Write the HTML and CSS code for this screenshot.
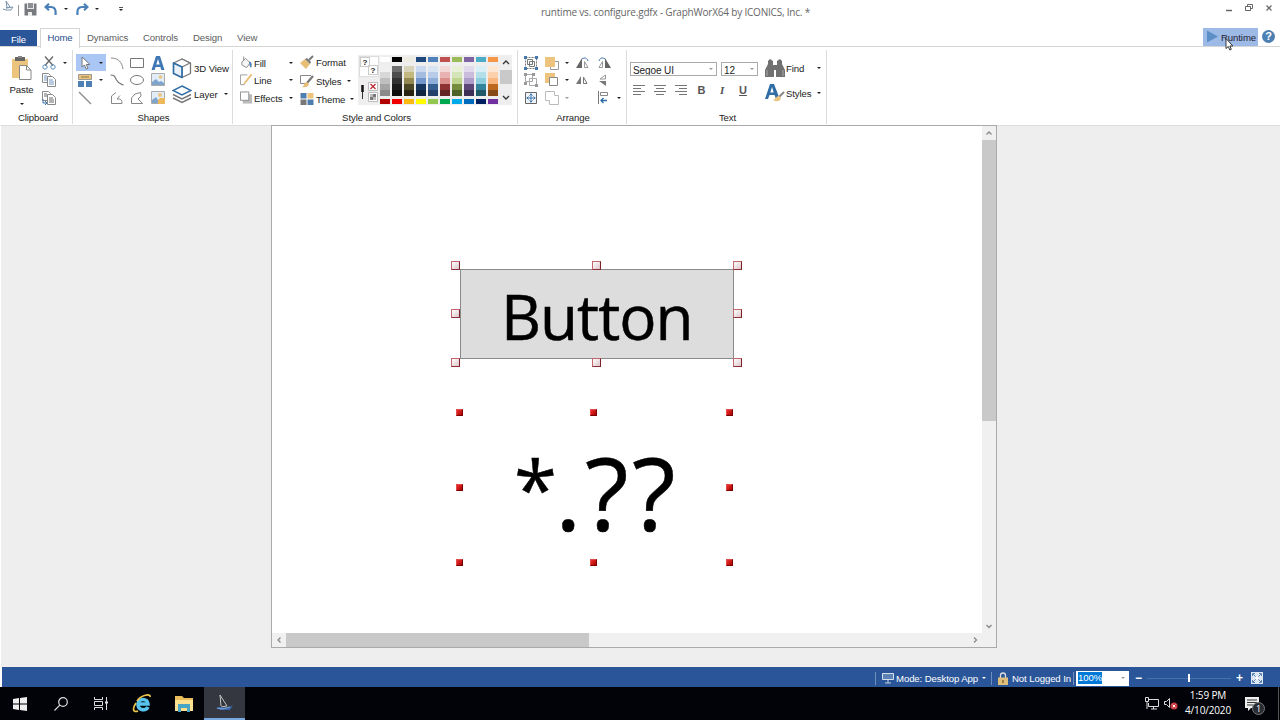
FILE: index.html
```
<!DOCTYPE html>
<html lang="en">
<head>
    <meta charset="UTF-8">
    <meta name="viewport" content="width=device-width, initial-scale=1.0">
    <title>GraphWorX64</title>
    <link rel="stylesheet" href="styles.css">
</head>
<body>

<header class="titlebar">
    <div class="quick-access">
        <svg class="qa-logo" width="11" height="12" viewBox="0 0 11 12" fill="none" stroke="#7893ad" stroke-width="1"><path d="M3 1l1 7M3 1l4 6-4 1M0 9l3 1h5l2-3-7 1"/></svg>
        <span class="qa-sep"></span>
        <svg class="qa-save" width="13" height="13" viewBox="0 0 13 13"><path d="M0.5 0.5h12v12h-12z" fill="#777b80"/><path d="M3 0h7v6H3z" fill="#e8e8e8"/><path d="M4 0h5v5H4z" fill="#8b8f94"/><path d="M4 9h4v4H4z" fill="#eee"/></svg>
        <svg class="qa-undo" width="14" height="13" viewBox="0 0 14 13" fill="none" stroke="#4a80b8" stroke-width="2.2"><path d="M5 0.8L1.5 4l3.5 3.3M2 4h5c4 0 5 3 4.5 8"/></svg>
        <i class="arrow"></i>
        <svg class="qa-redo" width="14" height="13" viewBox="0 0 14 13" fill="none" stroke="#4a80b8" stroke-width="2.2"><path d="M9 0.8L12.5 4 9 7.3M12 4H7C3 4 2 7 2.5 12"/></svg>
        <i class="arrow"></i>
        <span class="qa-more"><i class="arrow"></i></span>
    </div>
    <div class="window-title">runtime vs. configure.gdfx - GraphWorX64 by ICONICS, Inc. *</div>
    <svg class="window-buttons" width="50" height="14" viewBox="0 0 50 14" fill="none" stroke="#666"><path d="M1 9.500h6" stroke-width="1.500"/><path d="M20.500 5.500h5v4h-5zM22.500 5V3.500h5v4h-2"/><path d="M41.500 4.500l5 5M46.500 4.500l-5 5" stroke-width="1.200"/></svg>
</header>

<nav class="tabs">
    <span class="tab file">File</span>
    <span class="tab active">Home</span>
    <span class="tab dynamics">Dynamics</span>
    <span class="tab controls">Controls</span>
    <span class="tab design">Design</span>
    <span class="tab">View</span>
    <span class="runtime">
        <svg width="13" height="13" viewBox="0 0 13 13"><path d="M1 0.500L12 6.500 1 12.500z" fill="#5c8fc5"/></svg>
        <span>Runtime</span>
        <svg class="cursor" width="9" height="13" viewBox="0 0 9 13"><path d="M1 0.500v10l2.300-2 1.500 3.500 1.500-.700-1.500-3.300h3z" fill="#fff" stroke="#222" stroke-width=".9"/></svg>
    </span>
    <span class="help">?</span>
</nav>

<section class="ribbon">
    <div class="group clipboard">
        <div class="group-body">
            <div class="paste">
                <svg width="20" height="24" viewBox="0 0 20 24"><path d="M0 3h16v19H0z" fill="#ecc47e"/><path d="M3 1h10v4H3z" fill="#666"/><path d="M6 0h4v2H6z" fill="#888"/><path d="M7.500 9.500h7l4.500 4.500v9.500H7.500z" fill="#fff" stroke="#888"/><path d="M14.500 9.500V14H19" fill="none" stroke="#888"/></svg>
                <span>Paste</span>
                <i class="arrow"></i>
            </div>
            <div class="icon-grid clip-grid">
                <svg width="14" height="14" viewBox="0 0 14 14" fill="none"><path d="M3 0.500l8 9M11 0.500l-8 9" stroke="#666" stroke-width="1.300"/><circle cx="3" cy="11" r="2.200" stroke="#5f8fbe"/><circle cx="11" cy="11" r="2.200" stroke="#5f8fbe"/></svg>
                <i class="arrow"></i>
                <svg width="14" height="14" viewBox="0 0 14 14" fill="#fff" stroke="#888"><path d="M0.500 0.500h6l2 2v7h-8z"/><path d="M5.500 3.500h5l3 3v7h-8z"/><path d="M2 3h3M2 5h3M2 7h3M7 7h4M7 9h5M7 11h5" stroke="#6f97bf"/></svg>
                <span></span>
                <svg width="14" height="14" viewBox="0 0 14 14" fill="#fff" stroke="#888"><path d="M0.500 0.500h6l2 2v7h-8z"/><path d="M5.500 3.500h5l3 3v7h-8z"/><path d="M2 3h3M2 5h3M7 7h4M7 9h5M7 11h5" stroke="#666"/><path d="M1 8v4h3M3 10l2 2-2 2" stroke="#3d72aa" fill="none"/></svg>
                <span></span>
            </div>
        </div>
        <div class="group-label">Clipboard</div>
    </div>

    <div class="group shapes">
        <div class="group-body">
            <div class="icon-grid select-grid">
                <div class="selected">
                    <svg width="10" height="14" viewBox="0 0 10 14"><path d="M1 1v10l2.500-2 1.700 4 1.800-.800-1.700-3.700H9z" fill="#fff" stroke="#777"/></svg>
                    <i class="arrow"></i>
                </div>
                <div class="pick">
                    <svg width="14" height="13" viewBox="0 0 14 13"><path d="M0.500 0.500h13v5h-13z" fill="#ecc47e" stroke="#999"/><path d="M3 3h8" stroke="#8a7a55"/><path d="M0 7h6v6H0zM8 7h6v6H8z" fill="#4f80b4"/></svg>
                    <i class="arrow"></i>
                </div>
                <div class="pick">
                    <svg width="14" height="14" viewBox="0 0 14 14"><path d="M1 1l12 12" stroke="#888" stroke-width="1.200"/></svg>
                </div>
            </div>
            <div class="icon-grid shape-grid">
                <svg width="14" height="14" viewBox="0 0 14 14" fill="none" stroke="#888"><path d="M1 2c7 0 11 4 12 11"/></svg>
                <svg width="14" height="14" viewBox="0 0 14 14" fill="none" stroke="#777"><path d="M0.500 2.500h13v9H0.500z"/></svg>
                <svg width="14" height="14" viewBox="0 0 14 14"><path d="M0.500 14L5 0h4l4.500 14h-3.200l-.900-3H4.600l-.900 3zM5.300 8.500h3.400L7 3z" fill="#3f78b5" fill-rule="evenodd"/></svg>
                <svg width="14" height="14" viewBox="0 0 14 14" fill="none" stroke="#777" stroke-width="1.200"><path d="M0.500 2c4 0 4 1 6 5s4 4 7 5"/></svg>
                <svg width="14" height="14" viewBox="0 0 14 14" fill="none" stroke="#777"><ellipse cx="7" cy="7" rx="6.500" ry="4.500"/></svg>
                <svg width="14" height="14" viewBox="0 0 14 14"><path d="M0.500 0.500h13v12H0.500z" fill="#e3edf7" stroke="#aaa"/><circle cx="9.500" cy="4" r="1.800" fill="#ecc47e"/><path d="M1 12V9l4-3 3 3 2-1 3 2v2z" fill="#7fa5cc"/></svg>
                <svg width="14" height="14" viewBox="0 0 14 14" fill="none" stroke="#888"><path d="M6 1.500L1.500 5v7.500h10.500c0-3-1-4.500-3-4.500H7l3-3.500"/></svg>
                <svg width="14" height="14" viewBox="0 0 14 14" fill="none" stroke="#888"><path d="M10.500 1.500L5 3 1.500 7v5.500h11L8 8l3-3z"/></svg>
                <svg width="14" height="14" viewBox="0 0 14 14"><path d="M0.500 0.500h13v12H0.500z" fill="#e3edf7" stroke="#aaa"/><circle cx="9" cy="4" r="2" fill="#ecc47e"/><path d="M1 12V9l4-3 4 6z" fill="#7fa5cc"/><path d="M7 9l2-2h5v6H7z" fill="#ecb95c"/></svg>
            </div>
            <div class="view-column">
                <div class="tool">
                    <svg width="20" height="21" viewBox="0 0 20 21" fill="none" stroke-linejoin="round"><path d="M10 1l8.500 4v10.500L10 19.500z" stroke="#777" stroke-width="1.300"/><path d="M18 5l-8 4L1.500 5 10 1z" stroke="#777" stroke-width="1.300" fill="#fff"/><path d="M1.500 5L10 9v10.500l-8.500-4z" stroke="#316da5" stroke-width="1.700" fill="#eaf1f8"/></svg>
                    <span>3D View</span>
                </div>
                <div class="tool">
                    <svg width="20" height="19" viewBox="0 0 20 19" fill="none"><path d="M1 13l9 4.500 9-4.500M1 9.500L10 14l9-4.500" stroke="#777" stroke-width="1.500"/><path d="M10 1l9 4.500-9 4.500-9-4.500z" fill="#fff" stroke="#316da5" stroke-width="1.500"/></svg>
                    <span>Layer</span>
                    <i class="arrow"></i>
                </div>
            </div>
        </div>
        <div class="group-label">Shapes</div>
    </div>

    <div class="group style-colors">
        <div class="group-body">
            <div class="icon-grid fill-grid">
                <svg width="13" height="14" viewBox="0 0 14 14"><path d="M2 6l4-4 5 5-4 5-5-3z" fill="#f5f5f5" stroke="#888"/><path d="M4 0v5" stroke="#888"/><path d="M10 5c3 1 3 4 2 7-2-1-2-3-2-7z" fill="#4f80b4"/></svg>
                <span>Fill</span><i class="arrow"></i>
                <svg width="13" height="14" viewBox="0 0 14 14"><path d="M8 1.500H0.500V12H5" fill="none" stroke="#999"/><path d="M12.500 1l-8 10" stroke="#e7be76" stroke-width="2"/></svg>
                <span>Line</span><i class="arrow"></i>
                <svg width="13" height="14" viewBox="0 0 14 14"><path d="M3 3h10v10H3z" fill="#bbb"/><path d="M0.500 0.500h9v9h-9z" fill="#fff" stroke="#888"/></svg>
                <span>Effects</span><i class="arrow"></i>
            </div>
            <div class="format-column">
                <div class="tool">
                    <svg width="14" height="14" viewBox="0 0 14 14"><path d="M0 8l5-4 5 5-4 5z" fill="#e7be76"/><path d="M5 4l2-1 4 4-1 2z" fill="#777"/><path d="M9 5l4-4" stroke="#777" stroke-width="2"/></svg>
                    <span>Format</span>
                </div>
                <div class="tool">
                    <svg width="14" height="14" viewBox="0 0 14 14"><path d="M11 1.500H0.500v8h5" fill="none" stroke="#888"/><path d="M13 2L7 9" stroke="#777" stroke-width="2.200"/><path d="M7 8c-3 0-2 3-5 5 4 1 7-1 7-3z" fill="#e7be76"/></svg>
                    <span>Styles</span><i class="arrow"></i>
                </div>
                <div class="tool">
                    <svg width="14" height="14" viewBox="0 0 14 14"><path d="M0.500 1h6v5.500h-6zM7.500 7.500h6V13h-6z" fill="#4e7eaf"/><path d="M7.500 1h6v5.500h-6z" fill="#ecc47e"/><path d="M0.500 7.500h6V13h-6z" fill="#777"/></svg>
                    <span>Theme</span><i class="arrow"></i>
                </div>
            </div>
            <div class="palette">
                <div class="palette-tools">
                    <div class="unknown"><b>?</b><b>?</b></div>
                    <div class="pickers">
                        <svg width="7" height="20" viewBox="0 0 7 20"><path d="M0.500 0h6v20h-6z" fill="#eee"/><path d="M3.500 3v7" stroke="#111" stroke-width="2.500"/><path d="M3.500 10v7" stroke="#333"/></svg>
                        <svg width="10" height="20" viewBox="0 0 10 20"><path d="M.500.500h9v8h-9zM.500 10.500h9v9h-9z" fill="#fff" stroke="#bbb"/><path d="M2.500 2l5 5M7.500 2l-5 5" stroke="#b92b35" stroke-width="1.300"/><path d="M5 12h3v3H5zM2 15h3v3H2z" fill="#777"/><path d="M2 12h3v3H2zM5 15h3v3H5z" fill="#bbb"/></svg>
                    </div>
                </div>
                <div class="swatches" id="swatches"></div>
                <div class="palette-scroll">
                    <svg width="8" height="5" viewBox="0 0 8 5"><path d="M1 4l3-3 3 3" fill="none" stroke="#333" stroke-width="1.300"/></svg>
                    <span class="palette-thumb"></span>
                    <svg width="8" height="5" viewBox="0 0 8 5"><path d="M1 1l3 3 3-3" fill="none" stroke="#333" stroke-width="1.300"/></svg>
                </div>
            </div>
        </div>
        <div class="group-label">Style and Colors</div>
    </div>

    <div class="group arrange">
        <div class="group-body">
            <div class="icon-grid arrange-grid">
                <svg width="14" height="14" viewBox="0 0 14 14" fill="none" stroke="#777"><path d="M1.500 1.500h11v11h-11z" stroke-dasharray="2 1"/><path d="M3.500 3.500h5v5h-5zM5.500 5.500h5v5h-5z"/><path d="M0 0h3v3H0zM11 0h3v3h-3zM0 11h3v3H0zM11 11h3v3h-3z" fill="#4578ad" stroke="none"/></svg>
                <svg width="14" height="14" viewBox="0 0 14 14"><path d="M5.500 5.500h8v8h-8z" fill="#fff" stroke="#999"/><path d="M0 1h10v10H0z" fill="#ecc47e"/></svg>
                <i class="arrow"></i>
                <svg width="14" height="12" viewBox="0 0 14 12"><path d="M6 1v10H0z" fill="#666"/><path d="M8.500 4.500v6H12z" fill="none" stroke="#999"/><path d="M6 2c3-2 5-1 6 2" fill="none" stroke="#4578ad"/></svg>
                <svg width="14" height="12" viewBox="0 0 14 12"><path d="M8 1v10h6z" fill="#666"/><path d="M5.500 4.500v6H2z" fill="none" stroke="#999"/><path d="M8 2C5 0 3 1 2 4" fill="none" stroke="#4578ad"/></svg>
                <span></span>

                <svg width="14" height="14" viewBox="0 0 14 14" fill="none" stroke="#aaa"><path d="M1.500 1.500h7v7h-7zM5.500 5.500h7v7h-7z"/><path d="M0 0h3v3H0zM8 0h3v3H8zM0 9h3v3H0zM11 11h3v3h-3z" fill="#999" stroke="none"/></svg>
                <svg width="14" height="14" viewBox="0 0 14 14"><path d="M0 0h10v10H0z" fill="#ecc47e"/><path d="M4.500 4.500h8v8h-8z" fill="#fff" stroke="#888"/></svg>
                <i class="arrow"></i>
                <svg width="12" height="10" viewBox="0 0 12 10"><path d="M5 1v8H0z" fill="#777"/><path d="M7.500 2v6.500h3.500z" fill="none" stroke="#777"/></svg>
                <svg width="12" height="12" viewBox="0 0 12 12"><path d="M9 7v5L2 7z" fill="#777"/><path d="M8.500 1v4H3z" fill="none" stroke="#999"/></svg>
                <span></span>

                <svg width="14" height="14" viewBox="0 0 14 14"><path d="M1.500 1.500h11v11h-11z" fill="#eef4fa" stroke="#666"/><path d="M7 2.500v9M2.500 7h9M5.500 4.500L7 3l1.500 1.500M5.500 9.500L7 11l1.500-1.500M4.500 5.500L3 7l1.500 1.500M9.500 5.500L11 7 9.500 8.500" stroke="#3d72aa" fill="none"/></svg>
                <svg width="14" height="14" viewBox="0 0 14 14" fill="none" stroke="#bbb"><path d="M0.500 0.500h9v4h4v9h-9v-4h-4z"/></svg>
                <i class="arrow pale"></i>
                <span></span>
                <svg width="12" height="13" viewBox="0 0 12 13" fill="none"><path d="M1.500 0v13" stroke="#777"/><path d="M3.500 1.500h7v3h-7z" stroke="#888"/><path d="M10 9.500H4M6.500 7L4 9.500 6.500 12" stroke="#316da5" stroke-width="1.400"/></svg>
                <i class="arrow"></i>
            </div>
        </div>
        <div class="group-label">Arrange</div>
    </div>

    <div class="group text">
        <div class="group-body">
            <div class="font-column">
                <div class="combos">
                    <div class="combo family"><span>Segoe UI</span><i class="arrow pale"></i></div>
                    <div class="combo size"><span>12</span><i class="arrow pale"></i></div>
                </div>
                <div class="text-buttons">
                    <svg width="12" height="10" viewBox="0 0 12 10" stroke="#777"><path d="M0 .500h12M0 3.500h8M0 6.500h12M0 9.500h8"/></svg>
                    <svg width="12" height="10" viewBox="0 0 12 10" stroke="#777"><path d="M0 .500h12M2 3.500h8M0 6.500h12M2 9.500h8"/></svg>
                    <svg width="12" height="10" viewBox="0 0 12 10" stroke="#777"><path d="M0 .500h12M4 3.500h8M0 6.500h12M4 9.500h8"/></svg>
                    <b>B</b>
                    <em>I</em>
                    <u>U</u>
                </div>
            </div>
            <div class="find-column">
                <div class="tool">
                    <svg width="20" height="18" viewBox="0 0 20 18" fill="#707070"><path d="M3 2l2-2 3 2v4l1 2v10H0V11L3 5zM17 2l-2-2-3 2v4l-1 2v10h9V11l-3-6z"/><path d="M8 6h4v5H8z"/><path d="M2 11v6M18 11v6" stroke="#aaa"/></svg>
                    <span>Find</span><i class="arrow"></i>
                </div>
                <div class="tool">
                    <svg width="20" height="19" viewBox="0 0 20 19"><path d="M0 16L5 1h4l5 13-3 2-1.500-4H4.500L3 16zM5.300 9.500h3.400L7 4z" fill="#316da5" fill-rule="evenodd"/><path d="M19 9l-5 5" stroke="#888" stroke-width="2"/><path d="M14 13c-3 0-3 3-6 4 3 2 7 2 8-2z" fill="#ecc47e"/></svg>
                    <span>Styles</span><i class="arrow"></i>
                </div>
            </div>
        </div>
        <div class="group-label">Text</div>
    </div>
</section>

<main class="workspace">
    <div class="document">
        <div class="canvas">
            <div class="object button-object">Button</div>
            <div class="object value-object"><span class="star">*</span>.??</div>
        </div>
        <div class="vscroll">
            <svg width="14" height="14" viewBox="0 0 14 14"><path d="M4.500 8.500L7 6l2.500 2.500" fill="none" stroke="#888" stroke-width="1.300"/></svg>
            <span class="vthumb"></span>
            <svg width="14" height="14" viewBox="0 0 14 14"><path d="M4.500 6L7 8.500 9.500 6" fill="none" stroke="#888" stroke-width="1.300"/></svg>
        </div>
        <div class="hscroll">
            <svg width="14" height="14" viewBox="0 0 14 14"><path d="M8.500 4.500L6 7l2.500 2.500" fill="none" stroke="#888" stroke-width="1.300"/></svg>
            <span class="hthumb"></span>
            <svg width="14" height="14" viewBox="0 0 14 14"><path d="M6 4.500L8.500 7 6 9.500" fill="none" stroke="#888" stroke-width="1.300"/></svg>
        </div>
    </div>
</main>

<div class="statusbar">
    <div class="status-item mode">
        <svg width="12" height="11" viewBox="0 0 12 11"><path d="M.500.500h11v6H.500z" fill="#5d82b4" stroke="#d5dfed"/><path d="M6 7v3M3 10h6" stroke="#c5d2e4"/></svg>
        <span>Mode: Desktop App</span>
        <i class="arrow light"></i>
    </div>
    <div class="status-item login">
        <svg width="10" height="13" viewBox="0 0 10 13"><path d="M2.500 6V3.500a2.500 2.500 0 0 1 5 0V6" fill="none" stroke="#ddd" stroke-width="1.300"/><path d="M0 5.500h10V13H0z" fill="#dfbe79"/><path d="M5 8v3" stroke="#735d2d" stroke-width="1.300"/></svg>
        <span>Not Logged In</span>
    </div>
    <div class="status-item">
        <div class="zoom-box"><span>100%</span><i class="arrow pale"></i></div>
    </div>
    <div class="slider"><b>−</b><span class="track"><span class="knob"></span></span><b>+</b></div>
    <svg class="fit" width="12" height="12" viewBox="0 0 12 12"><path d="M0 0h12v12H0z" fill="#dce7f3"/><path d="M1.500 4V1.500H4M8 1.500h2.500V4M10.500 8v2.500H8M4 10.500H1.500V8M2 2l8 8M10 2l-8 8" fill="none" stroke="#5d86b8"/><path d="M4.500 4.500h3v3h-3z" fill="#fff"/></svg>
</div>

<footer class="taskbar">
    <div class="task"><svg width="14" height="14" viewBox="0 0 14 14" fill="#eee"><path d="M0 2l6-1v5.500H0zM7 .900L14 0v6.500H7zM0 7.500h6V13l-6-1zM7 7.500h7V14l-7-.900z"/></svg></div>
    <div class="task"><svg width="14" height="14" viewBox="0 0 14 14" fill="none" stroke="#ddd" stroke-width="1.200"><circle cx="9" cy="5" r="4.300"/><path d="M5.800 8.200L.500 13.500"/></svg></div>
    <div class="task view"><svg width="15" height="14" viewBox="0 0 15 14" fill="none" stroke="#ddd"><path d="M1.500 0v2.500h8V0M1.500 13v-2.500h8V13M1.500 4.500h8v4h-8zM13.500 0v13"/><path d="M12 4.500h3v2h-3z" fill="#ddd" stroke="none"/></svg></div>
    <div class="task browser"><svg width="20" height="19" viewBox="0 0 20 19" fill="none"><path d="M16 13c-2 4-10 4-10-3 0-6 10-6 10 0H7" stroke="#58c5f0" stroke-width="3.600"/><path d="M5 7C9 1 19-1 18 3M4 9C0 15 1 19 6 17" stroke="#edc64c" stroke-width="1.700"/></svg></div>
    <div class="task"><svg width="18" height="16" viewBox="0 0 18 16"><path d="M0 0h7l2 2h9v13H0z" fill="#e9bd59"/><path d="M0 4h18v11H0z" fill="#fbe18f"/><path d="M3 16V8h12v8h-3v-4H6v4z" fill="#48a4c5"/></svg></div>
    <div class="task current"><svg width="18" height="17" viewBox="0 0 18 17" fill="none"><path d="M4 1l1 11M4 1l7 11-6 1" stroke="#c5c5c5"/><path d="M0 14l4-1 8 1 5-3-3 5H5z" fill="#3a67ac"/><path d="M1 14l5 1 8-2" stroke="#82a9de"/></svg></div>
    <div class="tray">
        <svg width="14" height="13" viewBox="0 0 14 13" fill="none" stroke="#ddd"><path d="M4 2.500h9.500v7h-10V6M6 12h6M8.500 10v2M.500.500h3v4h-3zM2 5v7"/></svg>
        <svg width="14" height="13" viewBox="0 0 14 13"><path d="M.500 4.500h2L5.500 1.500v9l-3-3h-2z" fill="none" stroke="#ddd"/><circle cx="10" cy="9" r="3.500" fill="#ce3b43"/><path d="M8.700 7.700l2.600 2.600M11.300 7.700l-2.600 2.600" stroke="#fff"/></svg>
    </div>
    <div class="clock"><span>1:59 PM</span><span>4/10/2020</span></div>
    <div class="notifications">
        <svg width="14" height="14" viewBox="0 0 14 14"><path d="M0 0h14v11H6l-3 3v-3H0z" fill="#eee"/><path d="M2 3h10M2 5.500h10M2 8h6" stroke="#333"/></svg>
        <span class="badge">1</span>
    </div>
    <span class="show-desktop"></span>
</footer>

<script>
    // One column per theme colour: base, five shades, standard colour
    const columns = [
        ['#ffffff', '#f0f0f0', '#d8d8d8', '#bfbfbf', '#a5a5a5', '#8a8a8a', '#b00000'],
        ['#000000', '#6d6d6d', '#4c4c4c', '#333333', '#1b1b1b', '#0c0c0c', '#f00000'],
        ['#eeece1', '#d8d3b8', '#c2b880', '#938953', '#4c4725', '#26220f', '#fdb913'],
        ['#1f497d', '#c9d8ee', '#a3bce0', '#7197ca', '#17365d', '#10243f', '#fffc00'],
        ['#4f81bd', '#d8e4f2', '#b6cce8', '#90b0db', '#365f91', '#24406a', '#92c850'],
        ['#c0504d', '#f2d8d7', '#e8b3b2', '#da8f8d', '#8d3230', '#632322', '#00a850'],
        ['#9bbb59', '#e8f1d8', '#d5e4b8', '#bfd58f', '#738c3d', '#4c6127', '#00a9e8'],
        ['#8064a2', '#e1daec', '#c9bddb', '#ae9dc8', '#5d4779', '#3d2e55', '#006bbd'],
        ['#4bacc6', '#d8f0f5', '#b2dfe9', '#8ecddd', '#31849b', '#205867', '#001f60'],
        ['#f79646', '#fde6d2', '#fbd0aa', '#f9b67e', '#bd681f', '#864a17', '#7030a0']
    ];
    const swatches = document.getElementById('swatches');
    columns.forEach(colors => {
        const column = document.createElement('div');
        column.className = 'swatch-column';
        column.innerHTML = colors.map(c => `<i style="background: ${c}"></i>`).join('');
        swatches.appendChild(column);
    });

    // Eight selection handles around each object
    document.querySelectorAll('.object').forEach(object => {
        ['nw', 'n', 'ne', 'w', 'e', 'sw', 's', 'se'].forEach(side => {
            const handle = document.createElement('span');
            handle.className = 'handle ' + side;
            object.appendChild(handle);
        });
    });
</script>

</body>
</html>
```
FILE: styles.css
```
* {
    box-sizing: border-box;
}

body {
    margin: 0;
    width: 1280px;
    height: 720px;
    overflow: hidden;
    display: flex;
    flex-direction: column;
    background: #fff;
    font-family: "Liberation Sans", Arial, sans-serif;
    font-size: 9.6px;
    letter-spacing: -0.1px;
    color: #222;
    white-space: nowrap;
}

svg {
    display: block;
    flex: none;
}

.arrow {
    flex: none;
    width: 0;
    height: 0;
    border: 2px solid transparent;
    border-top-color: #222;
    border-bottom: 0;
}

.arrow.pale {
    border-top-color: #999;
}

.arrow.light {
    border-top-color: #fff;
}

/* Title bar */
.titlebar {
    height: 28px;
    display: flex;
    position: relative;
    justify-content: center;
}

.quick-access {
    position: absolute;
    left: 3px;
    top: 1px;
    height: 16px;
    display: flex;
    align-items: center;
}

.qa-logo {
    margin-top: -6px;
}

.qa-sep {
    width: 1px;
    height: 11px;
    margin: 3px 5px 0 4px;
    background: #999;
}

.qa-undo {
    margin: 0 6px 0 7px;
}

.qa-redo {
    margin: 0 6px 0 7px;
}

.qa-more {
    margin-left: 20px;
    padding-top: 1px;
    border-top: 1px solid #555;
}

.qa-more .arrow {
    display: block;
}

.window-title {
    margin-left: 71px;
    padding-top: 5px;
    font-family: "Open Sans", sans-serif;
    font-size: 10px;
    line-height: 14px;
    letter-spacing: -0.2px;
    color: #666;
}

.window-buttons {
    position: absolute;
    right: 5px;
    top: 1px;
}

/* Tabs */
.tabs {
    height: 19px;
    display: flex;
    align-items: stretch;
    border-bottom: 1px solid #d5d5d5;
    line-height: 20px;
    color: #5c5c5c;
}

.tab.file {
    width: 37px;
    margin-right: 3px;
    background: #2a5699;
    color: #fff;
    text-align: center;
    margin-top: 2px;
}

.tab.active {
    width: 40px;
    margin-right: 7px;
    height: 20px;
    background: #fff;
    border: 1px solid #d5d5d5;
    border-bottom: 0;
    color: #2a4d8c;
    line-height: 18px;
    text-align: center;
}

.tab.dynamics {
    width: 56px;
}

.tab.controls {
    width: 50px;
}

.tab.design {
    width: 44px;
}

.runtime {
    position: relative;
    width: 55px;
    margin-left: auto;
    padding-left: 3px;
    display: flex;
    align-items: center;
    gap: 2px;
    background: #9db9e6;
    color: #223;
}

.runtime svg:first-child {
    margin-top: -1px;
}

.runtime span {
    padding-top: 2px;
}

.cursor {
    position: absolute;
    left: 22px;
    top: 10px;
}

.help {
    width: 13px;
    height: 13px;
    margin: 2px 5px 0 4px;
    border-radius: 50%;
    background: #4c80b5;
    color: #fff;
    font-size: 11px;
    font-weight: bold;
    line-height: 13px;
    text-align: center;
}

/* Ribbon */
.ribbon {
    height: 78px;
    display: flex;
    padding-top: 3px;
}

.group {
    height: 74px;
    border-right: 1px solid #dcdcdc;
    display: flex;
    flex-direction: column;
}

.group-body {
    height: 63px;
    padding-top: 4px;
    display: flex;
}

.group-label {
    padding: 2px 0 0 2px;
    line-height: 12px;
    text-align: center;
}

.clipboard {
    width: 73px;
}

.shapes {
    width: 160px;
}

.style-colors {
    width: 285px;
}

.arrange {
    width: 109px;
}

.text {
    width: 200px;
}

.clipboard .group-label {
    padding-left: 4px;
}

.style-colors .group-label {
    padding-left: 3px;
}

.icon-grid {
    display: grid;
    grid-auto-rows: 17.5px;
    align-items: center;
    align-content: start;
}

.paste {
    width: 43px;
    padding-top: 2px;
    display: flex;
    flex-direction: column;
    align-items: center;
}

.paste span {
    margin: 4px 0 7px;
    line-height: 12px;
}

.clip-grid {
    grid-template-columns: 20px 6px;
}

.select-grid {
    width: 30px;
    margin-left: 3px;
}

.clip-grid svg {
    margin-left: -1px;
}

.selected,
.pick {
    height: 17px;
    display: flex;
    align-items: center;
    justify-content: space-between;
    padding: 0 3px 0 2px;
}

.selected {
    padding-left: 5px;
    background: #a9c6f5;
}

.shape-grid {
    margin-left: 4px;
    grid-template-columns: 20px 21px 21px;
}

.tool {
    display: flex;
    align-items: center;
    gap: 3px;
}

.tool span {
    padding-top: 1px;
}

.tool .arrow {
    margin-left: 4px;
}

.view-column {
    padding-top: 1px;
}

.view-column .tool {
    height: 26px;
    gap: 2px;
}

.fill-grid {
    width: 60px;
    margin-left: 7px;
    grid-template-columns: 14px 35px 6px;
}

.fill-grid span {
    padding-top: 1px;
}

.format-column {
    width: 58px;
    margin-top: -1px;
}

.format-column .tool {
    height: 18.5px;
    gap: 2px;
}

.format-column .arrow {
    margin-left: 3px;
}

.palette {
    margin-top: 1px;
    height: 50px;
    display: flex;
    background: #eee;
}

.palette-tools {
    width: 22px;
    display: flex;
    flex-direction: column;
    justify-content: space-between;
    padding: 1px 0 3px 1px;
}

.unknown {
    width: 20px;
    height: 21px;
    display: flex;
    background: #fff;
    border: 1px solid #ddd;
}

.unknown b {
    width: 10px;
    height: 10px;
    border: 1px solid #ccc;
    font-size: 8px;
    line-height: 9px;
    text-align: center;
}

.unknown b:last-child {
    margin: 8px 0 0 -2px;
}

.pickers {
    display: flex;
    gap: 2px;
}

.swatches {
    display: flex;
    gap: 2px;
    padding: 2px 1px 0 0;
}

.swatch-column {
    width: 10px;
}

.swatch-column i {
    display: block;
    height: 6px;
}

.swatch-column i:first-child {
    height: 5px;
    margin-bottom: 4px;
}

.swatch-column i:last-child {
    height: 5px;
    margin-top: 3px;
}

.palette-scroll {
    width: 13px;
    padding: 5px 0;
    display: flex;
    flex-direction: column;
    align-items: center;
    justify-content: space-between;
}

.palette-thumb {
    width: 12px;
    height: 14px;
    margin-top: -6px;
    background: #c9c9c9;
}

.arrange-grid {
    margin-left: 6px;
    grid-template-columns: 21px 20px 11px 21px 20px 6px;
}

.font-column {
    width: 138px;
    padding: 8px 0 0 3px;
}

.combos {
    display: flex;
    gap: 4px;
}

.combo {
    height: 14px;
    border: 1px solid #aaa;
    display: flex;
    align-items: center;
    justify-content: space-between;
    padding: 0 3px 0 2px;
    overflow: hidden;
}

.combo span {
    padding-top: 3px;
    font-size: 10px;
}

.combo.family {
    width: 87px;
}

.combo.size {
    width: 37px;
}

.text-buttons {
    display: grid;
    grid-template-columns: repeat(6, 20.8px);
    align-items: center;
    margin-top: 7px;
    padding-left: 3px;
    line-height: 14px;
    font-size: 11px;
    color: #555;
}

.text-buttons b,
.text-buttons em,
.text-buttons u {
    width: 12px;
    text-align: center;
    font-weight: bold;
}

.text-buttons em {
    font-family: "Liberation Serif", serif;
}

.find-column {
    padding-top: 1px;
}

.find-column .tool {
    width: 56px;
    height: 25px;
    gap: 1px;
}

.find-column .arrow {
    margin-left: auto;
}

/* Workspace */
.workspace {
    height: 542px;
    border-top: 1px solid #ddd;
    border-left: 1px solid #fff;
    background: #eee;
    padding-left: 270px;
}

.document {
    width: 726px;
    height: 523px;
    margin-top: -1px;
    border: 1px solid #aaa;
    display: grid;
    grid-template: 507px 14px / 710px 14px;
}

.canvas {
    position: relative;
    background: #fff;
}

.object {
    position: absolute;
    font-family: "Open Sans", "Noto Sans", sans-serif;
    color: #000;
    -webkit-text-stroke: 0.5px #000;
}

.button-object {
    left: 188px;
    top: 143px;
    width: 274px;
    height: 90px;
    border: 1px solid #8a8a8a;
    background: #ddd;
    padding-left: 40px;
    font-size: 62px;
    line-height: 93px;
    letter-spacing: -1px;
}

.value-object {
    left: 187px;
    top: 286px;
    width: 270px;
    height: 150px;
    padding-left: 55px;
    font-size: 101px;
    line-height: 160px;
    letter-spacing: 3.5px;
}

.value-object .star {
    font-size: 78px;
    line-height: 0;
    vertical-align: 13px;
    letter-spacing: -2px;
}

.handle {
    position: absolute;
    width: 9px;
    height: 9px;
    border: 1px solid #c4666d;
    border-right-color: #7d2029;
    border-bottom-color: #8d3039;
    background: linear-gradient(135deg, #fff, #dcc5c9);
}

.value-object .handle {
    width: 7px;
    height: 7px;
    border-color: #e04a4a #7d0000 #7d0000 #e04a4a;
    background: linear-gradient(135deg, #f03030, #a80000);
}

.handle.nw, .handle.w, .handle.sw {
    left: -10px;
}

.handle.n, .handle.s {
    left: 131px;
}

.handle.ne, .handle.e, .handle.se {
    right: -9px;
}

.handle.nw, .handle.n, .handle.ne {
    top: -9px;
}

.handle.w, .handle.e {
    top: 39px;
}

.handle.sw, .handle.s, .handle.se {
    bottom: -9px;
}

.value-object .nw, .value-object .w, .value-object .sw {
    left: -3px;
}

.value-object .ne, .value-object .e, .value-object .se {
    right: -4px;
}

.value-object .nw, .value-object .n, .value-object .ne {
    top: -3px;
}

.value-object .w, .value-object .e {
    top: 72px;
}

.value-object .sw, .value-object .s, .value-object .se {
    bottom: -4px;
}

.vscroll {
    display: flex;
    flex-direction: column;
    justify-content: space-between;
    background: #f0f0f0;
}

.vthumb {
    height: 281px;
    margin-bottom: auto;
    background: #c9c9c9;
}

.hscroll {
    grid-column: 1 / 3;
    display: flex;
    padding-right: 14px;
    background: #f0f0f0;
}

.hthumb {
    width: 303px;
    margin-right: auto;
    background: #c9c9c9;
}

/* Status bar */
.statusbar {
    height: 20px;
    margin-left: 2px;
    padding-top: 2px;
    display: flex;
    align-items: center;
    justify-content: flex-end;
    background: #2a5699;
    color: #fff;
}

.status-item {
    height: 13px;
    border-left: 1px solid #6f8fbf;
    display: flex;
    align-items: center;
}

.status-item > span {
    padding-top: 1px;
}

.mode {
    width: 116px;
    padding-left: 6px;
    gap: 2px;
}

.mode .arrow {
    margin-left: 2px;
}

.login {
    width: 82px;
    padding-left: 6px;
    gap: 4px;
}

.zoom-box {
    width: 53px;
    height: 15px;
    margin-left: 2px;
    padding: 0 4px 0 2px;
    display: flex;
    align-items: center;
    justify-content: space-between;
    background: #fff;
}

.zoom-box span {
    background: #0078d7;
    line-height: 12px;
}

.slider {
    width: 108px;
    margin-left: 6px;
    display: flex;
    align-items: center;
    gap: 5px;
    font-size: 12px;
}

.track {
    flex: 1;
    height: 1px;
    background: #4870aa;
}

.knob {
    display: block;
    width: 2px;
    height: 8px;
    margin: -4px 0 0 41px;
    background: #fff;
}

.fit {
    margin: 0 17px 0 8px;
}

/* Taskbar */
.taskbar {
    height: 33px;
    display: flex;
    background: #020308;
    color: #fff;
    font-family: "Open Sans", sans-serif;
}

.task {
    width: 41px;
    display: flex;
    align-items: center;
    justify-content: center;
}

.task:first-child {
    width: 40px;
}

.task.view {
    width: 39px;
}

.task.browser {
    width: 43px;
}

.task.current {
    background: #34373f;
    border-bottom: 2px solid #76a9e0;
}

.tray {
    margin: 0 -1px 0 auto;
    display: flex;
    align-items: center;
    gap: 6px;
}

.tray svg:first-child {
    margin-right: -1px;
}

.clock {
    width: 62px;
    display: flex;
    flex-direction: column;
    align-items: center;
    padding-top: 1px;
    line-height: 15px;
    font-size: 10px;
    letter-spacing: -0.15px;
}

.notifications {
    position: relative;
    width: 39px;
    padding: 10px 0 0 6px;
}

.badge {
    position: absolute;
    left: 13px;
    top: 15px;
    width: 13px;
    height: 13px;
    border: 1px solid #777;
    border-radius: 50%;
    background: #2a2c33;
    font-size: 9px;
    line-height: 11px;
    text-align: center;
}

.show-desktop {
    width: 2px;
    border-left: 1px solid #555;
}
```
